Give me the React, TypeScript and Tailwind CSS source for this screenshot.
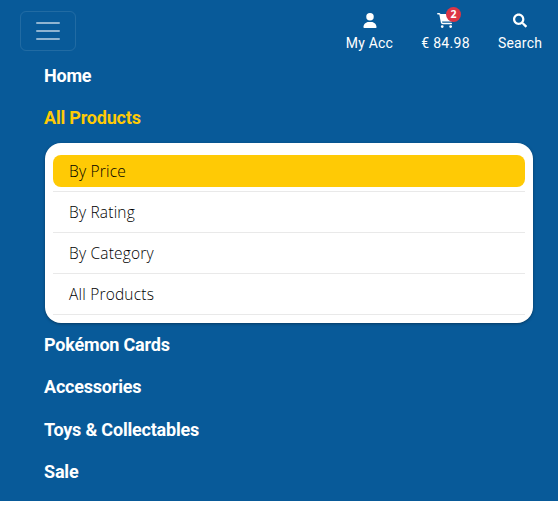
import { FaCartShopping, FaUser } from 'react-icons/fa6';
import { FaSearch } from 'react-icons/fa';

const priceItems = ['By Price', 'By Rating', 'By Category', 'All Products'];
const links = ['Pokémon Cards', 'Accessories', 'Toys & Collectables', 'Sale'];
const linkClass =
  "block w-fit whitespace-nowrap font-['Roboto',sans-serif] text-[18px] leading-[27px] font-bold tracking-[-0.2px]";

export default function App() {
  return (
    <div className="h-[514px] w-[559px] overflow-hidden bg-white">
      <div className="flex h-[501px] w-[558px] flex-col bg-[#085a99]">
        <header className="flex h-[62px] shrink-0 justify-between pl-5 pt-[11px] font-['Roboto',sans-serif] text-sm leading-[21px] text-white">
          <button
            aria-label="Menu"
            className="flex h-10 w-14 items-center justify-center rounded-md border border-white/10"
          >
            <svg viewBox="0 0 30 30" className="size-[30px]">
              <path
                d="M4 7h22M4 15h22M4 23h22"
                stroke="rgba(255,255,255,0.55)"
                strokeWidth="2"
                strokeLinecap="round"
              />
            </svg>
          </button>
          <nav className="flex gap-7 pr-[15.5px]">
            <a className="flex w-[48px] flex-col items-center whitespace-nowrap pt-0.5">
              <FaUser className="h-[15px] w-[14px]" />
              <span className="mt-[5px] tracking-[0.2px]">My Acc</span>
            </a>
            <a className="relative flex w-[48px] flex-col items-center whitespace-nowrap pt-0.5">
              <FaCartShopping className="h-[15px] w-[17px]" />
              <span className="mt-[5px] tracking-[0.3px]">€ 84.98</span>
              <span className="absolute left-[24.5px] -top-1 flex size-[15px] items-center justify-center rounded-full bg-[#dc3545] font-['Open_Sans',sans-serif] text-[10.5px] leading-none font-bold">
                2
              </span>
            </a>
            <a className="flex w-[45px] flex-col items-center whitespace-nowrap pt-0.5">
              <FaSearch className="h-[15px] w-[14px]" />
              <span className="mt-[5px] tracking-[0.2px]">Search</span>
            </a>
          </nav>
        </header>

        <nav className="flex flex-col pl-11 pr-[25px] text-white">
          <a className={linkClass}>Home</a>
          <a className={`${linkClass} mt-[15px] text-[#ffca05]`}>All Products</a>
          <ul className="mt-3 ml-px rounded-2xl bg-white p-2 shadow-[0_1px_3px_rgba(0,0,0,0.35)]">
            {priceItems.map((item, i) => (
              <li key={item} className="border-b border-[#e9e9e9] py-1">
                <a
                  className={`block h-8 rounded-lg px-4 font-['Open_Sans',sans-serif] text-[15.5px] leading-[33px] font-light tracking-[0.2px] ${
                    i === 0 ? 'bg-[#ffca05] text-black' : 'text-black'
                  }`}
                >
                  {item}
                </a>
              </li>
            ))}
          </ul>
          <div className="mt-2 flex flex-col gap-[15.3px]">
            {links.map((link) => (
              <a key={link} className={linkClass}>
                {link}
              </a>
            ))}
          </div>
        </nav>
      </div>
    </div>
  );
}
